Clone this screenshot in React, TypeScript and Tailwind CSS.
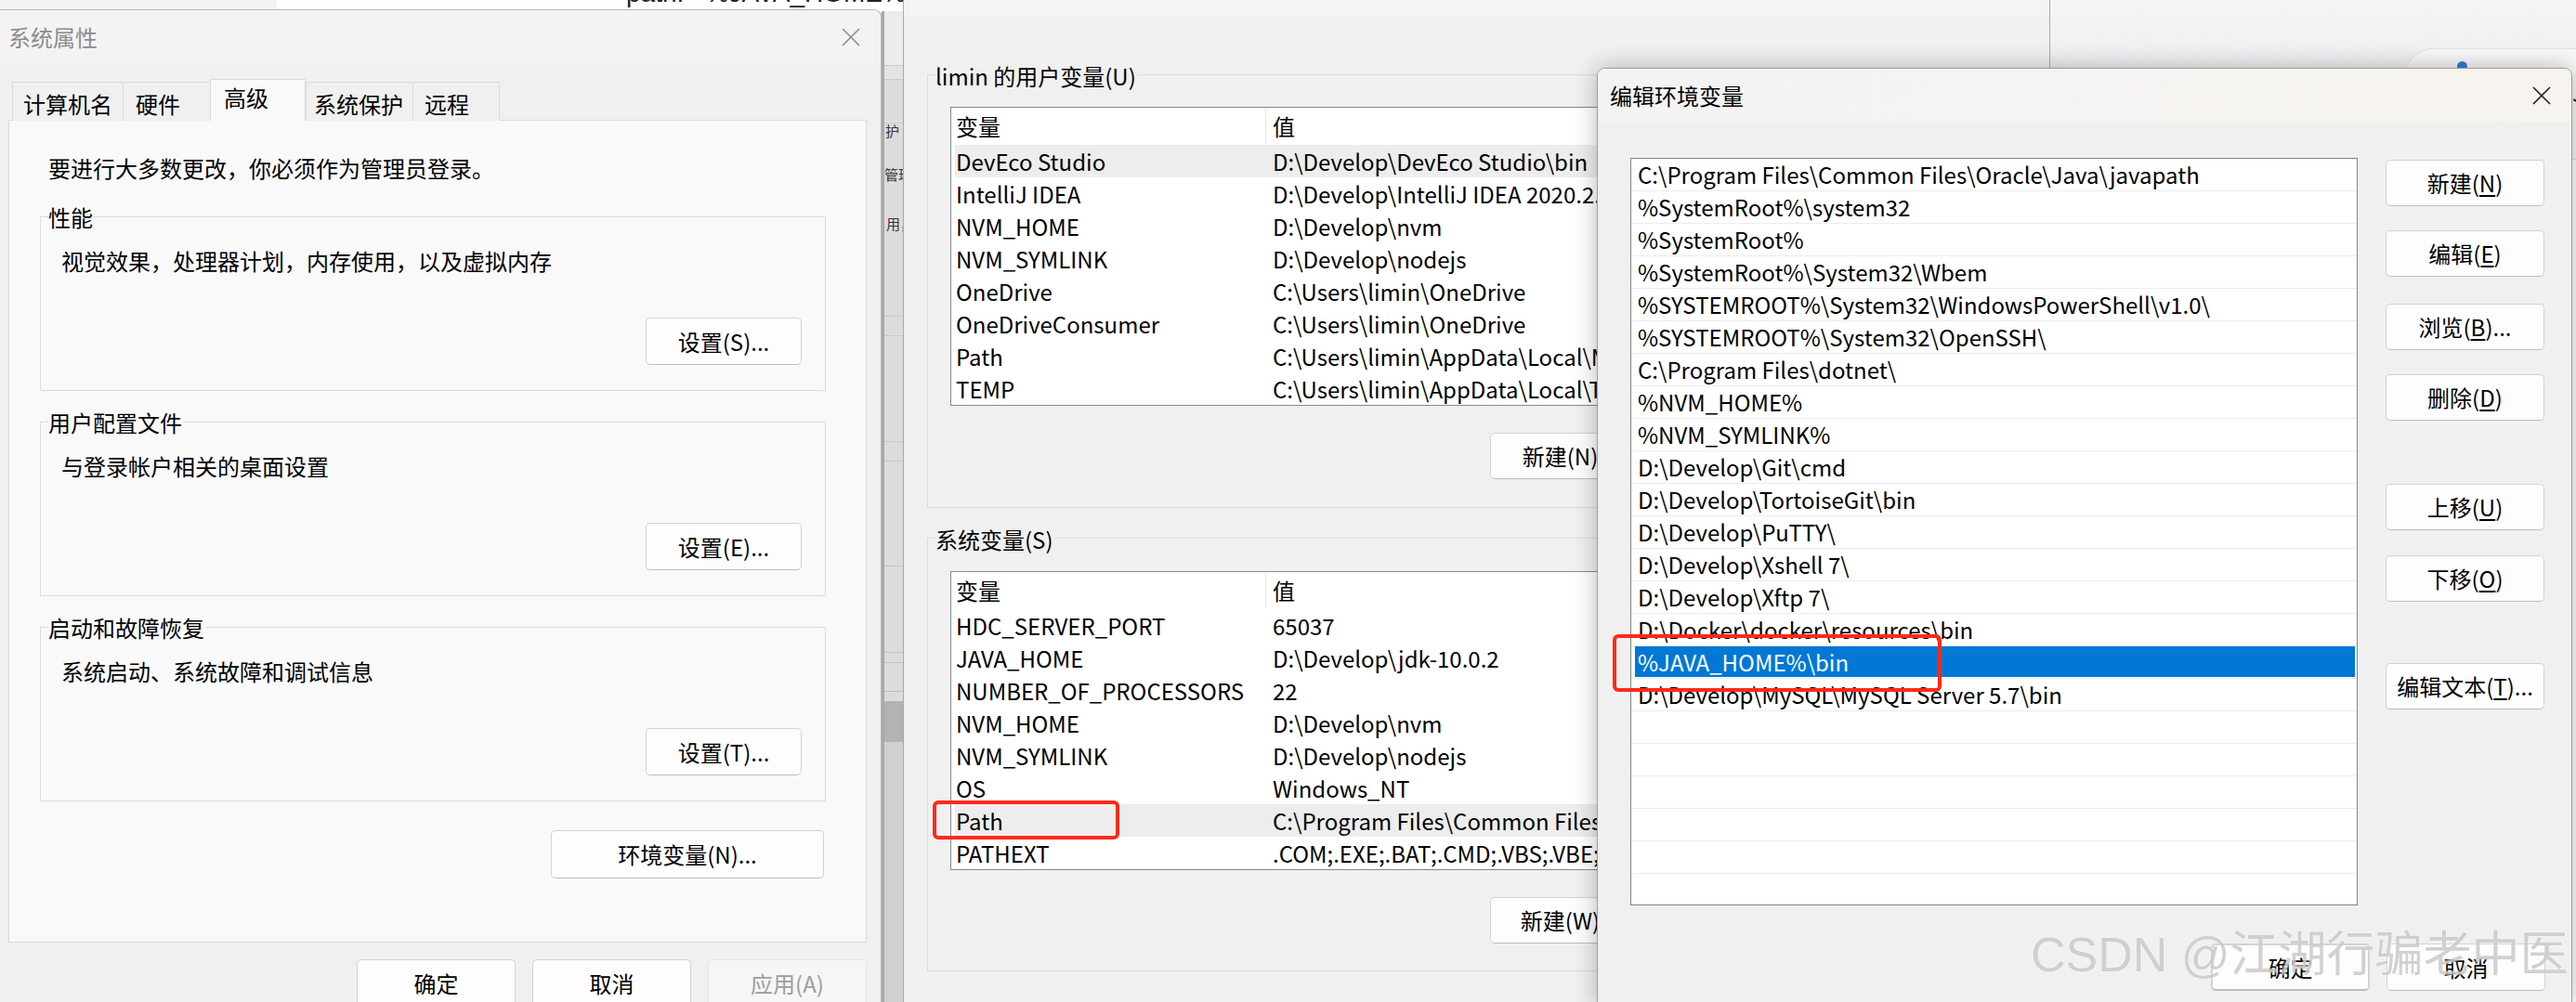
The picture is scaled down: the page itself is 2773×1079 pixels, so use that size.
import React from 'react'

const userVars: [string, string][] = [
  ['DevEco Studio', 'D:\\Develop\\DevEco Studio\\bin'],
  ['IntelliJ IDEA', 'D:\\Develop\\IntelliJ IDEA 2020.2.3\\bin;'],
  ['NVM_HOME', 'D:\\Develop\\nvm'],
  ['NVM_SYMLINK', 'D:\\Develop\\nodejs'],
  ['OneDrive', 'C:\\Users\\limin\\OneDrive'],
  ['OneDriveConsumer', 'C:\\Users\\limin\\OneDrive'],
  ['Path', 'C:\\Users\\limin\\AppData\\Local\\Microsoft\\WindowsApps;'],
  ['TEMP', 'C:\\Users\\limin\\AppData\\Local\\Temp'],
]

const sysVars: [string, string][] = [
  ['HDC_SERVER_PORT', '65037'],
  ['JAVA_HOME', 'D:\\Develop\\jdk-10.0.2'],
  ['NUMBER_OF_PROCESSORS', '22'],
  ['NVM_HOME', 'D:\\Develop\\nvm'],
  ['NVM_SYMLINK', 'D:\\Develop\\nodejs'],
  ['OS', 'Windows_NT'],
  ['Path', 'C:\\Program Files\\Common Files\\Oracle\\Java\\javapath;'],
  ['PATHEXT', '.COM;.EXE;.BAT;.CMD;.VBS;.VBE;.JS;.JSE;.WSF;.WSH;.MSC'],
]

const pathEntries = [
  'C:\\Program Files\\Common Files\\Oracle\\Java\\javapath',
  '%SystemRoot%\\system32',
  '%SystemRoot%',
  '%SystemRoot%\\System32\\Wbem',
  '%SYSTEMROOT%\\System32\\WindowsPowerShell\\v1.0\\',
  '%SYSTEMROOT%\\System32\\OpenSSH\\',
  'C:\\Program Files\\dotnet\\',
  '%NVM_HOME%',
  '%NVM_SYMLINK%',
  'D:\\Develop\\Git\\cmd',
  'D:\\Develop\\TortoiseGit\\bin',
  'D:\\Develop\\PuTTY\\',
  'D:\\Develop\\Xshell 7\\',
  'D:\\Develop\\Xftp 7\\',
  'D:\\Docker\\docker\\resources\\bin',
  '%JAVA_HOME%\\bin',
  'D:\\Develop\\MySQL\\MySQL Server 5.7\\bin',
]

function CloseX({ className = '' }: { className?: string }) {
  return (
    <svg width="20" height="20" viewBox="0 0 20 20" className={className}>
      <path d="M1 1 L19 19 M19 1 L1 19" stroke="currentColor" strokeWidth="1.6" fill="none" />
    </svg>
  )
}

function Btn({ children, className = '' }: { children: React.ReactNode; className?: string }) {
  return (
    <div
      className={`flex items-center justify-center rounded-[5px] border border-[#d3d3d3] border-b-[#bdbdbd] bg-[#fdfdfd] text-[24px] leading-[24px] text-black ${className}`}
    >
      {children}
    </div>
  )
}

function Group({ label, desc, button, className = '' }: { label: string; desc: string; button: string; className?: string }) {
  return (
    <div className={`relative ml-[33px] flex h-[188px] w-[846px] flex-col border border-[#dcdcdc] ${className}`}>
      <span className="absolute left-[8px] top-[-12px] bg-[#f9f9f9] pr-[1px] leading-[24px]">{label}</span>
      <div className="pl-[22px] pt-[35px] leading-[24px]">{desc}</div>
      <Btn className="mr-[25px] mt-[49px] h-[51px] w-[168px] self-end">{button}</Btn>
    </div>
  )
}

function VarList({ rows, hi }: { rows: [string, string][]; hi: number }) {
  return (
    <div className="ml-[24px] h-[322px] w-[1132px] overflow-hidden border border-[#828790] bg-white">
      <div className="ml-[4px] flex h-[40px] items-center">
        <div className="w-[334px] pl-[1px]">变量</div>
        <div className="flex h-[38px] items-center border-l border-[#e5e5e5] pl-[7px]">值</div>
      </div>
      {rows.map(([k, v], i) => (
        <div key={k + i} className={`ml-[4px] flex h-[35px] items-center whitespace-nowrap ${i === hi ? 'bg-[#ededed]' : ''}`}>
          <div className="w-[334px] pl-[1px]">{k}</div>
          <div className="pl-[8px]">{v}</div>
        </div>
      ))}
    </div>
  )
}

function Underlined({ pre, key_, post }: { pre: string; key_: string; post: string }) {
  return (
    <span>
      {pre}(<span className="underline underline-offset-[3px]">{key_}</span>){post}
    </span>
  )
}

export default function App() {
  const tabs = [
    { t: '计算机名', w: 'w-[119px]', pl: 'pl-[11px]' },
    { t: '硬件', w: 'w-[94px]', pl: 'pl-[13px]' },
    { t: '高级', w: 'w-[103px]', pl: 'pl-[14px]', active: true },
    { t: '系统保护', w: 'w-[115px]', pl: 'pl-[8px]' },
    { t: '远程', w: 'w-[94px]', pl: 'pl-[12px]' },
  ]

  return (
    <div className="relative h-[1079px] w-[2773px] overflow-hidden bg-white font-['Noto_Sans_CJK_SC',sans-serif] text-[24px] text-black">
      {/* desktop behind */}
      <div className="absolute left-0 top-0 h-[12px] w-[298px] bg-[#f3f3f3]" />
      <div className="absolute left-[674px] top-[-21px] whitespace-pre font-['Liberation_Sans',sans-serif] text-[28px] leading-[28px] text-[#222]">
        path:   %JAVA_HOME%\bin
      </div>
      <div className="absolute left-[2206px] top-0 h-[120px] w-[567px] bg-gradient-to-b from-[#f4f5f7] to-[#e9eaec]" />
      <div className="absolute left-[2589px] top-[52px] h-[120px] w-[260px] rounded-[30px] border border-[#e2e2e2] bg-[#f8f8f8]" />
      <div className="absolute left-[2645px] top-[66px] h-[11px] w-[11px] rounded-full bg-[#2f7de1]" />
      <div className="absolute left-[2769px] top-[88px] text-[24px] leading-[24px] text-[#222]">J</div>

      {/* 系统属性 */}
      <div className="absolute left-0 top-[10px] flex h-[1080px] w-[950px] flex-col overflow-hidden rounded-tr-[9px] border-r-2 border-t border-[#b8b8b8] bg-[#f0f0f0]">
        <div className="flex h-[57px] shrink-0 items-center justify-between bg-[#f3f3f3] pl-[9px] pr-[22px]">
          <span className="leading-[24px] text-[#8c8c8c]">系统属性</span>
          <CloseX className="text-[#8c8c8c]" />
        </div>
        <div className="relative z-10 -mb-px flex items-end pl-[13px] pt-[17px]">
          {tabs.map((tab) =>
            tab.active ? (
              <div key={tab.t} className={`flex h-[45px] items-start border-x border-t border-[#dadada] bg-[#f9f9f9] pt-[7px] leading-[24px] ${tab.w} ${tab.pl}`}>
                {tab.t}
              </div>
            ) : (
              <div key={tab.t} className={`flex h-[42px] items-center border-l border-t border-[#dadada] bg-[#f0f0f0] pt-[4px] leading-[24px] last:border-r ${tab.w} ${tab.pl}`}>
                {tab.t}
              </div>
            )
          )}
        </div>
        <div className="ml-[9px] flex h-[886px] w-[924px] shrink-0 flex-col border border-[#dadada] bg-[#f9f9f9]">
          <div className="pl-[42px] pt-[39px] leading-[24px]">要进行大多数更改，你必须作为管理员登录。</div>
          <Group className="mt-[40px]" label="性能" desc="视觉效果，处理器计划，内存使用，以及虚拟内存" button="设置(S)..." />
          <Group className="mt-[33px]" label="用户配置文件" desc="与登录帐户相关的桌面设置" button="设置(E)..." />
          <Group className="mt-[33px]" label="启动和故障恢复" desc="系统启动、系统故障和调试信息" button="设置(T)..." />
          <Btn className="ml-[583px] mt-[31px] h-[52px] w-[294px]">环境变量(N)...</Btn>
        </div>
        <div className="mt-[18px] flex justify-end gap-[18px] pr-[15px]">
          <Btn className="h-[51px] w-[171px]">确定</Btn>
          <Btn className="h-[51px] w-[171px]">取消</Btn>
          <div className="flex h-[51px] w-[171px] items-center justify-center rounded-[5px] border border-[#e6e6e6] bg-[#f6f6f6] leading-[24px] text-[#9d9d9d]">
            应用(A)
          </div>
        </div>
      </div>

      {/* window strip behind */}
      <div className="absolute left-[949px] top-[12px] flex h-[1067px] w-[24px] flex-col overflow-hidden border-l-[3px] border-[#a9a9a9] bg-[#dcdcdc] text-[15px] leading-[15px] text-[#333]">
        <div className="h-[59px] shrink-0 border-b border-[#c9c9c9] bg-[#ececec]" />
        <div className="h-[15px] shrink-0 border-b border-[#c9c9c9] bg-[#e4e4e4]" />
        <div className="h-[47px] shrink-0 border-b border-[#cfcfcf]" />
        <div className="whitespace-nowrap pl-[1px]">护</div>
        <div className="mt-[32px] whitespace-nowrap">管理</div>
        <div className="mt-[38px] whitespace-nowrap pl-[2px]">用，</div>
        <div className="mt-[92px] h-px shrink-0 bg-[#c9c9c9]" />
        <div className="mt-[20px] h-px shrink-0 bg-[#c9c9c9]" />
        <div className="mt-[113px] h-px shrink-0 bg-[#c9c9c9]" />
        <div className="mt-[20px] h-px shrink-0 bg-[#c9c9c9]" />
        <div className="mt-[112px] h-px shrink-0 bg-[#c2c2c2]" />
        <div className="mt-[92px] h-px shrink-0 bg-[#c2c2c2]" />
        <div className="mt-[10px] h-px shrink-0 bg-[#c2c2c2]" />
        <div className="mt-[30px] h-px shrink-0 bg-[#bdbdbd]" />
        <div className="mt-[10px] h-[44px] shrink-0 bg-[#b3b3b3]" />
        <div className="flex-1 bg-[#d0d0d0]" />
      </div>

      {/* 环境变量 */}
      <div className="absolute left-[972px] top-0 flex h-[1079px] w-[1235px] flex-col border-x border-[#a8a8a8] bg-[#f0f0f0]">
        <div className="h-[17px] shrink-0 bg-[#f4f4f4]" />
        <div className="relative ml-[25px] mt-[63px] flex h-[467px] w-[1182px] flex-col border border-[#dcdcdc]">
          <span className="absolute left-[8px] top-[-11px] bg-[#f0f0f0] pr-[1px] leading-[24px]">limin 的用户变量(U)</span>
          <div className="mt-[34px]">
            <VarList rows={userVars} hi={0} />
          </div>
          <Btn className="ml-[605px] mt-[29px] h-[50px] w-[171px]">新建(N)...</Btn>
        </div>
        <div className="relative ml-[25px] mt-[32px] flex h-[467px] w-[1182px] flex-col border border-[#dcdcdc]">
          <span className="absolute left-[8px] top-[-11px] bg-[#f0f0f0] pr-[1px] leading-[24px]">系统变量(S)</span>
          <div className="mt-[35px]">
            <VarList rows={sysVars} hi={6} />
          </div>
          <Btn className="ml-[605px] mt-[29px] h-[50px] w-[171px]">新建(W)...</Btn>
        </div>
      </div>

      {/* 编辑环境变量 */}
      <div className="absolute left-[1719px] top-[73px] flex h-[1010px] w-[1050px] flex-col overflow-hidden rounded-t-[9px] border border-[#9c9c9c] bg-[#f0f0f0] shadow-[0_0_26px_rgba(0,0,0,0.28)]">
        <div className="flex h-[57px] shrink-0 items-center justify-between bg-gradient-to-r from-[#f3f3f3] to-[#f7f4ef] pl-[13px] pr-[22px]">
          <span className="leading-[24px]">编辑环境变量</span>
          <CloseX className="text-[#1a1a1a]" />
        </div>
        <div className="flex pl-[35px] pt-[39px]">
          <div className="h-[805px] w-[783px] overflow-hidden border border-[#80808c] bg-white">
            {Array.from({ length: 23 }).map((_, i) => {
              const txt = pathEntries[i] ?? ''
              const sel = i === 15
              return (
                <div key={i} className="h-[35px] border-b border-[#ececec] pb-px">
                  <div
                    className={`ml-[4px] mr-[2px] flex h-full items-center whitespace-nowrap pl-[3px] leading-[24px] ${sel ? 'bg-[#0078d4] text-white' : ''}`}
                  >
                    {txt}
                  </div>
                </div>
              )
            })}
          </div>
          <div className="ml-[30px] flex w-[171px] flex-col">
            <Btn className="mt-[2px] h-[50px]"><Underlined pre="新建" key_="N" post="" /></Btn>
            <Btn className="mt-[26px] h-[50px]"><Underlined pre="编辑" key_="E" post="" /></Btn>
            <Btn className="mt-[29px] h-[50px]"><Underlined pre="浏览" key_="B" post="..." /></Btn>
            <Btn className="mt-[26px] h-[50px]"><Underlined pre="删除" key_="D" post="" /></Btn>
            <Btn className="mt-[68px] h-[50px]"><Underlined pre="上移" key_="U" post="" /></Btn>
            <Btn className="mt-[27px] h-[50px]"><Underlined pre="下移" key_="O" post="" /></Btn>
            <Btn className="mt-[66px] h-[50px]"><Underlined pre="编辑文本" key_="T" post="..." /></Btn>
          </div>
        </div>
        <div className="mt-[41px] flex justify-end gap-[18px] pr-[28px]">
          <Btn className="h-[51px] w-[171px] border-2 border-[#0067c0] border-b-[#0067c0]">确定</Btn>
          <Btn className="h-[51px] w-[171px]">取消</Btn>
        </div>
      </div>

      {/* annotations */}
      <div className="absolute left-[1004px] top-[862px] z-50 h-[42px] w-[201px] rounded-[6px] border-4 border-[#ff2a1a]" />
      <div className="absolute left-[1736px] top-[683px] z-50 h-[62px] w-[354px] rounded-[6px] border-4 border-[#ff2a1a]" />

      {/* watermark */}
      <div className="absolute left-[2186px] top-[996px] z-50 whitespace-nowrap font-['Liberation_Sans','Noto_Sans_CJK_SC',sans-serif] text-[52px] leading-[64px] text-[rgba(140,140,140,0.4)] [text-shadow:0_0_2px_rgba(255,255,255,0.9)]">
        CSDN @江湖行骗老中医
      </div>
    </div>
  )
}
